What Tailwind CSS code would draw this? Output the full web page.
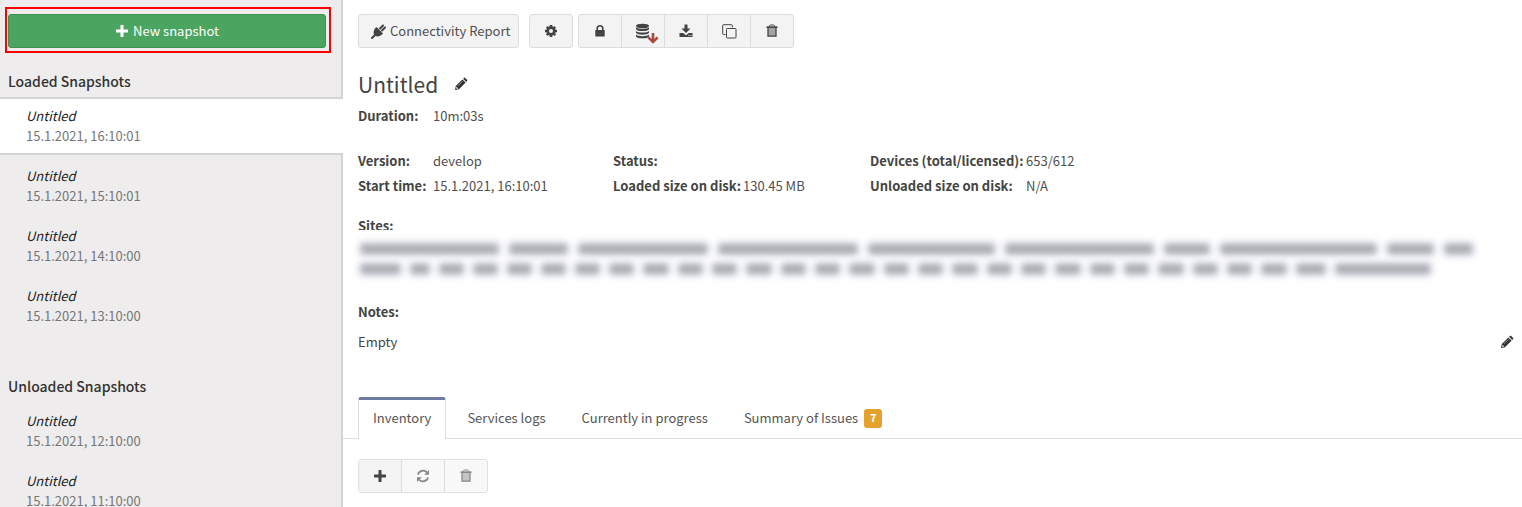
<!DOCTYPE html>
<html lang="en">
<head>
<meta charset="utf-8">
<title>Snapshots</title>
<script src="https://cdn.jsdelivr.net/npm/@tailwindcss/browser@4"></script>
</head>
<body class="h-screen overflow-hidden flex bg-white text-[13px] leading-5 text-[#444] font-['Noto_Sans_CJK_SC',sans-serif]">

<svg class="hidden">
  <symbol id="plus" viewBox="0 0 14 14"><path fill="currentColor" d="M5.500 1.500q0-.5.500-.5h2q.5 0 .5.500v4h4q.5 0 .5.500v2q0 .5-.5.500h-4v4q0 .5-.5.500h-2q-.5 0-.5-.5v-4h-4q-.5 0-.5-.5v-2q0-.5.500-.5h4z"/></symbol>
  <symbol id="pencil" viewBox="0 0 14 14"><path fill="currentColor" d="M1 13l.8-4 6.600-6.600 3.200 3.200-6.600 6.600zM9.100 1.700l.8-.7c.4-.4.9-.4 1.300 0l1.800 1.800c.4.4.4.9 0 1.300l-.7.8z"/><path fill="#fff" d="M2.500 9.800l1.700 1.700-1.100.5-1-1z"/><path stroke="#bbb" stroke-width=".7" d="M4 8.800l4.500-4.500"/></symbol>
  <symbol id="trash" viewBox="0 0 14 14"><path fill="none" stroke="currentColor" d="M4.300 2.600q0-1.600 1.200-1.600h3q1.200 0 1.200 1.600"/><path fill="currentColor" d="M1.500 2.300h11v1.700h-11z"/><path fill="currentColor" fill-opacity=".45" stroke="currentColor" stroke-width="1.300" d="M3 4v8.200h8V4"/></symbol>
</svg>

<aside class="w-[343px] shrink-0 bg-[#eeecec] border-r-2 border-[#d3d3d3] pt-[7px]">
  <div class="ml-[5px] mr-[10px] border-2 border-[#f00] pl-px pt-[5px] pr-[3px] pb-[3px]">
    <button class="w-full h-[34px] flex items-center justify-center gap-1 rounded-[3px] border border-[#3f9152] bg-[#4ba560] text-white"><svg class="size-[14px]"><use href="#plus"/></svg>New snapshot</button>
  </div>
  <h2 class="px-2 pt-4 pb-[3px] text-[14px] leading-6 font-medium text-[#333]">Loaded Snapshots</h2>
  <ul>
    <li class="my-px -mr-[2px] border-y-2 border-[#d3d3d3] bg-white py-[7px] pl-[26px]"><a href="#" class="block"><em class="block text-[#222]">Untitled</em><span class="block text-[#777]">15.1.2021, 16:10:01</span></a></li>
    <li class="py-[10px] pl-[26px]"><a href="#" class="block"><em class="block text-[#222]">Untitled</em><span class="block text-[#777]">15.1.2021, 15:10:01</span></a></li>
    <li class="py-[10px] pl-[26px]"><a href="#" class="block"><em class="block text-[#222]">Untitled</em><span class="block text-[#777]">15.1.2021, 14:10:00</span></a></li>
    <li class="py-[10px] pl-[26px]"><a href="#" class="block"><em class="block text-[#222]">Untitled</em><span class="block text-[#777]">15.1.2021, 13:10:00</span></a></li>
  </ul>
  <h2 class="px-2 pt-[38px] pb-[3px] text-[14px] leading-6 font-medium text-[#333]">Unloaded Snapshots</h2>
  <ul>
    <li class="py-[10px] pl-[26px]"><a href="#" class="block"><em class="block text-[#222]">Untitled</em><span class="block text-[#777]">15.1.2021, 12:10:00</span></a></li>
    <li class="py-[10px] pl-[26px]"><a href="#" class="block"><em class="block text-[#222]">Untitled</em><span class="block text-[#777]">15.1.2021, 11:10:00</span></a></li>
  </ul>
</aside>

<main class="flex-1 min-w-0 pt-[14px]">
  <div class="flex px-[15px] text-[#444]">
    <button class="h-[34px] pl-3 pr-2 flex items-center gap-1 rounded-[3px] border border-[#dcdcdc] bg-[#f3f3f3] text-[#505050]">
      <svg class="size-[15px] text-[#444]" viewBox="0 0 15 15"><path d="M1 14l3.500-3.500M9 4.500L12 1.500M11 6.500L14 3.500" stroke="currentColor" stroke-width="2" stroke-linecap="round"/><path fill="currentColor" d="M5.500 3l6.500 6.500c-1.800 2.400-4.800 3.600-7.500 2.500l-1.500-1.500C1.900 7.800 3.100 4.800 5.500 3z"/></svg>Connectivity Report</button>
    <button aria-label="Settings" class="ml-[10px] w-11 h-[34px] grid place-items-center rounded-[3px] border border-[#dcdcdc] bg-[#f3f3f3]">
      <svg class="size-[14px]" viewBox="0 0 14 14"><g stroke="currentColor" stroke-width="2.600"><path d="M7 1v12M1 7h12M2.800 2.800l8.400 8.400M11.200 2.800l-8.400 8.400"/></g><circle cx="7" cy="7" r="4.700" fill="currentColor"/><circle cx="7" cy="7" r="2" fill="#f3f3f3"/></svg></button>
    <div class="ml-[5px] flex h-[34px] rounded-[3px] border border-[#dcdcdc] bg-[#f3f3f3] divide-x divide-[#dcdcdc]">
      <button aria-label="Lock" class="w-[43px] grid place-items-center"><svg class="size-[14px]" viewBox="0 0 14 14"><path fill="none" stroke="currentColor" stroke-width="1.600" d="M4.200 7V4.500a2.800 2.800 0 0 1 5.600 0V7"/><rect x="2.300" y="6" width="9.400" height="6.500" rx=".6" fill="currentColor"/></svg></button>
      <button aria-label="Unload" class="w-[43px] grid place-items-center"><svg class="w-[32px] h-[26px]" viewBox="0 0 32 26"><g fill="currentColor"><ellipse cx="15.500" cy="8" rx="6.500" ry="2.300"/><path d="M9 9.300c1.500 2.200 11.500 2.200 13 0v1.900c-1 2.500-12 2.500-13 0zM9 12.900c1.500 2.200 11.500 2.200 13 0v1.900c-1 2.500-12 2.500-13 0zM9 16.500c1.500 2.200 11.500 2.200 13 0v1.900c-1 2.500-12 2.500-13 0z"/></g><path fill="none" stroke="#a94b42" stroke-width="2.600" d="M26 15v9M21.300 19.300l4.700 4.700 4.700-4.700"/></svg></button>
      <button aria-label="Download" class="w-[43px] grid place-items-center"><svg class="size-[14px]" viewBox="0 0 14 14"><path fill="currentColor" d="M5.500.5h3v4h3L7 9 2.500 4.500h3zM.5 9h3.700L7 11.300 9.800 9h3.700v4H.5z"/><path fill="#f3f3f3" d="M9.500 11h1v1h-1zM11.500 11h1v1h-1z"/></svg></button>
      <button aria-label="Copy" class="w-[43px] grid place-items-center"><svg class="size-[15px]" viewBox="0 0 15 15" fill="none" stroke="currentColor"><path d="M3.500 10.500h-2q-.8 0-.8-.8V1.500q0-.8.8-.8h8q.8 0 .8.8v2"/><rect x="4.500" y="4.500" width="9.500" height="9.500" rx=".8"/></svg></button>
      <button aria-label="Delete" class="w-[42px] grid place-items-center"><svg class="size-[14px]"><use href="#trash"/></svg></button>
    </div>
  </div>

  <div class="px-[15px]">
    <div class="flex items-center gap-4 pt-5 pb-[5px]">
      <h1 class="text-[21px] leading-8">Untitled</h1>
      <button aria-label="Edit name"><svg class="size-[14px] text-[#333]"><use href="#pencil"/></svg></button>
    </div>
    <dl class="grid grid-cols-[75px_180px_130px_127px_156px_1fr] gap-y-[5px] pt-px whitespace-nowrap text-[#505050]">
      <dt class="font-bold text-[#444]">Duration:</dt><dd class="col-span-5 pb-5">10m:03s</dd>
      <dt class="font-bold text-[#444]">Version:</dt><dd>develop</dd>
      <dt class="font-bold text-[#444]">Status:</dt><dd></dd>
      <dt class="font-bold text-[#444]">Devices (total/licensed):</dt><dd>653/612</dd>
      <dt class="font-bold text-[#444]">Start time:</dt><dd>15.1.2021, 16:10:01</dd>
      <dt class="font-bold text-[#444]">Loaded size on disk:</dt><dd>130.45 MB</dd>
      <dt class="font-bold text-[#444]">Unloaded size on disk:</dt><dd>N/A</dd>
    </dl>
    <h3 class="pt-5 font-bold">Sites:</h3>
    <!-- redacted site names; the white block laps over the heading's lower edge -->
    <div id="sites" aria-hidden="true" class="relative -mt-[6px] pt-[9px] bg-white">
      <div class="flex h-5 gap-3 items-center px-[3px] blur-[3px]" data-widths="137,57,128,138,125,147,44,155,45,27"></div>
      <div class="flex h-5 gap-[11px] items-center px-[3px] blur-[3px]" data-widths="39,18,23,23,23,23,23,23,24,23,23,24,23,23,24,23,23,24,23,23,24,23,23,24,23,23,24,28,94"></div>
    </div>
    <h3 class="pt-[23px] font-bold">Notes:</h3>
    <div class="flex items-center justify-between pt-[10px]">
      <p>Empty</p>
      <button aria-label="Edit notes" class="-mr-[7px]"><svg class="size-[14px] text-[#333]"><use href="#pencil"/></svg></button>
    </div>
  </div>

  <nav class="mt-[45px] flex gap-[6px] px-[15px] border-b border-[#dcdcdc] text-[#555]">
    <a href="#" class="-mb-px h-[42px] px-[14px] pt-2 border-x border-t-3 border-x-[#dcdcdc] border-t-[#6d7ba0] rounded-t-[3px] bg-white">Inventory</a>
    <a href="#" class="px-[15px] pt-[11px]">Services logs</a>
    <a href="#" class="px-[15px] pt-[11px]">Currently in progress</a>
    <a href="#" class="px-[15px] pt-[11px] flex gap-[6px]">Summary of Issues <span class="w-[18px] h-[19px] mt-px rounded-[3px] bg-[#e5a32d] text-white text-[10px] leading-[18px] font-black text-center">7</span></a>
  </nav>
  <div class="pt-5 px-[15px] flex">
    <div class="flex h-[34px] rounded-[3px] border border-[#e0e0e0] divide-x divide-[#dcdcdc] bg-[#f8f8f8] text-[#888]">
      <button aria-label="Add" class="w-[43px] grid place-items-center bg-[#f3f3f3] text-[#444]"><svg class="size-[14px]"><use href="#plus"/></svg></button>
      <button aria-label="Refresh" disabled class="w-[43px] grid place-items-center"><svg class="size-[14px]" viewBox="0 0 14 14"><path fill="none" stroke="currentColor" stroke-width="1.800" d="M2 5.500A5.200 5.200 0 0 1 11 3.500M12 8.500A5.200 5.200 0 0 1 3 10.500"/><path fill="currentColor" d="M13 1v4.800H8.200zM1 13V8.200h4.800z"/></svg></button>
      <button aria-label="Delete" disabled class="w-[42px] grid place-items-center"><svg class="size-[14px]"><use href="#trash"/></svg></button>
    </div>
  </div>
</main>

<script>
document.querySelectorAll('#sites [data-widths]').forEach(row => {
  row.dataset.widths.split(',').forEach(w => {
    const bar = document.createElement('span');
    bar.className = 'h-[10px] shrink-0 rounded-[3px] bg-[#abacb2] ring-4 ring-[#eaecf4]';
    bar.style.width = w + 'px';
    row.append(bar);
  });
});
</script>
</body>
</html>
